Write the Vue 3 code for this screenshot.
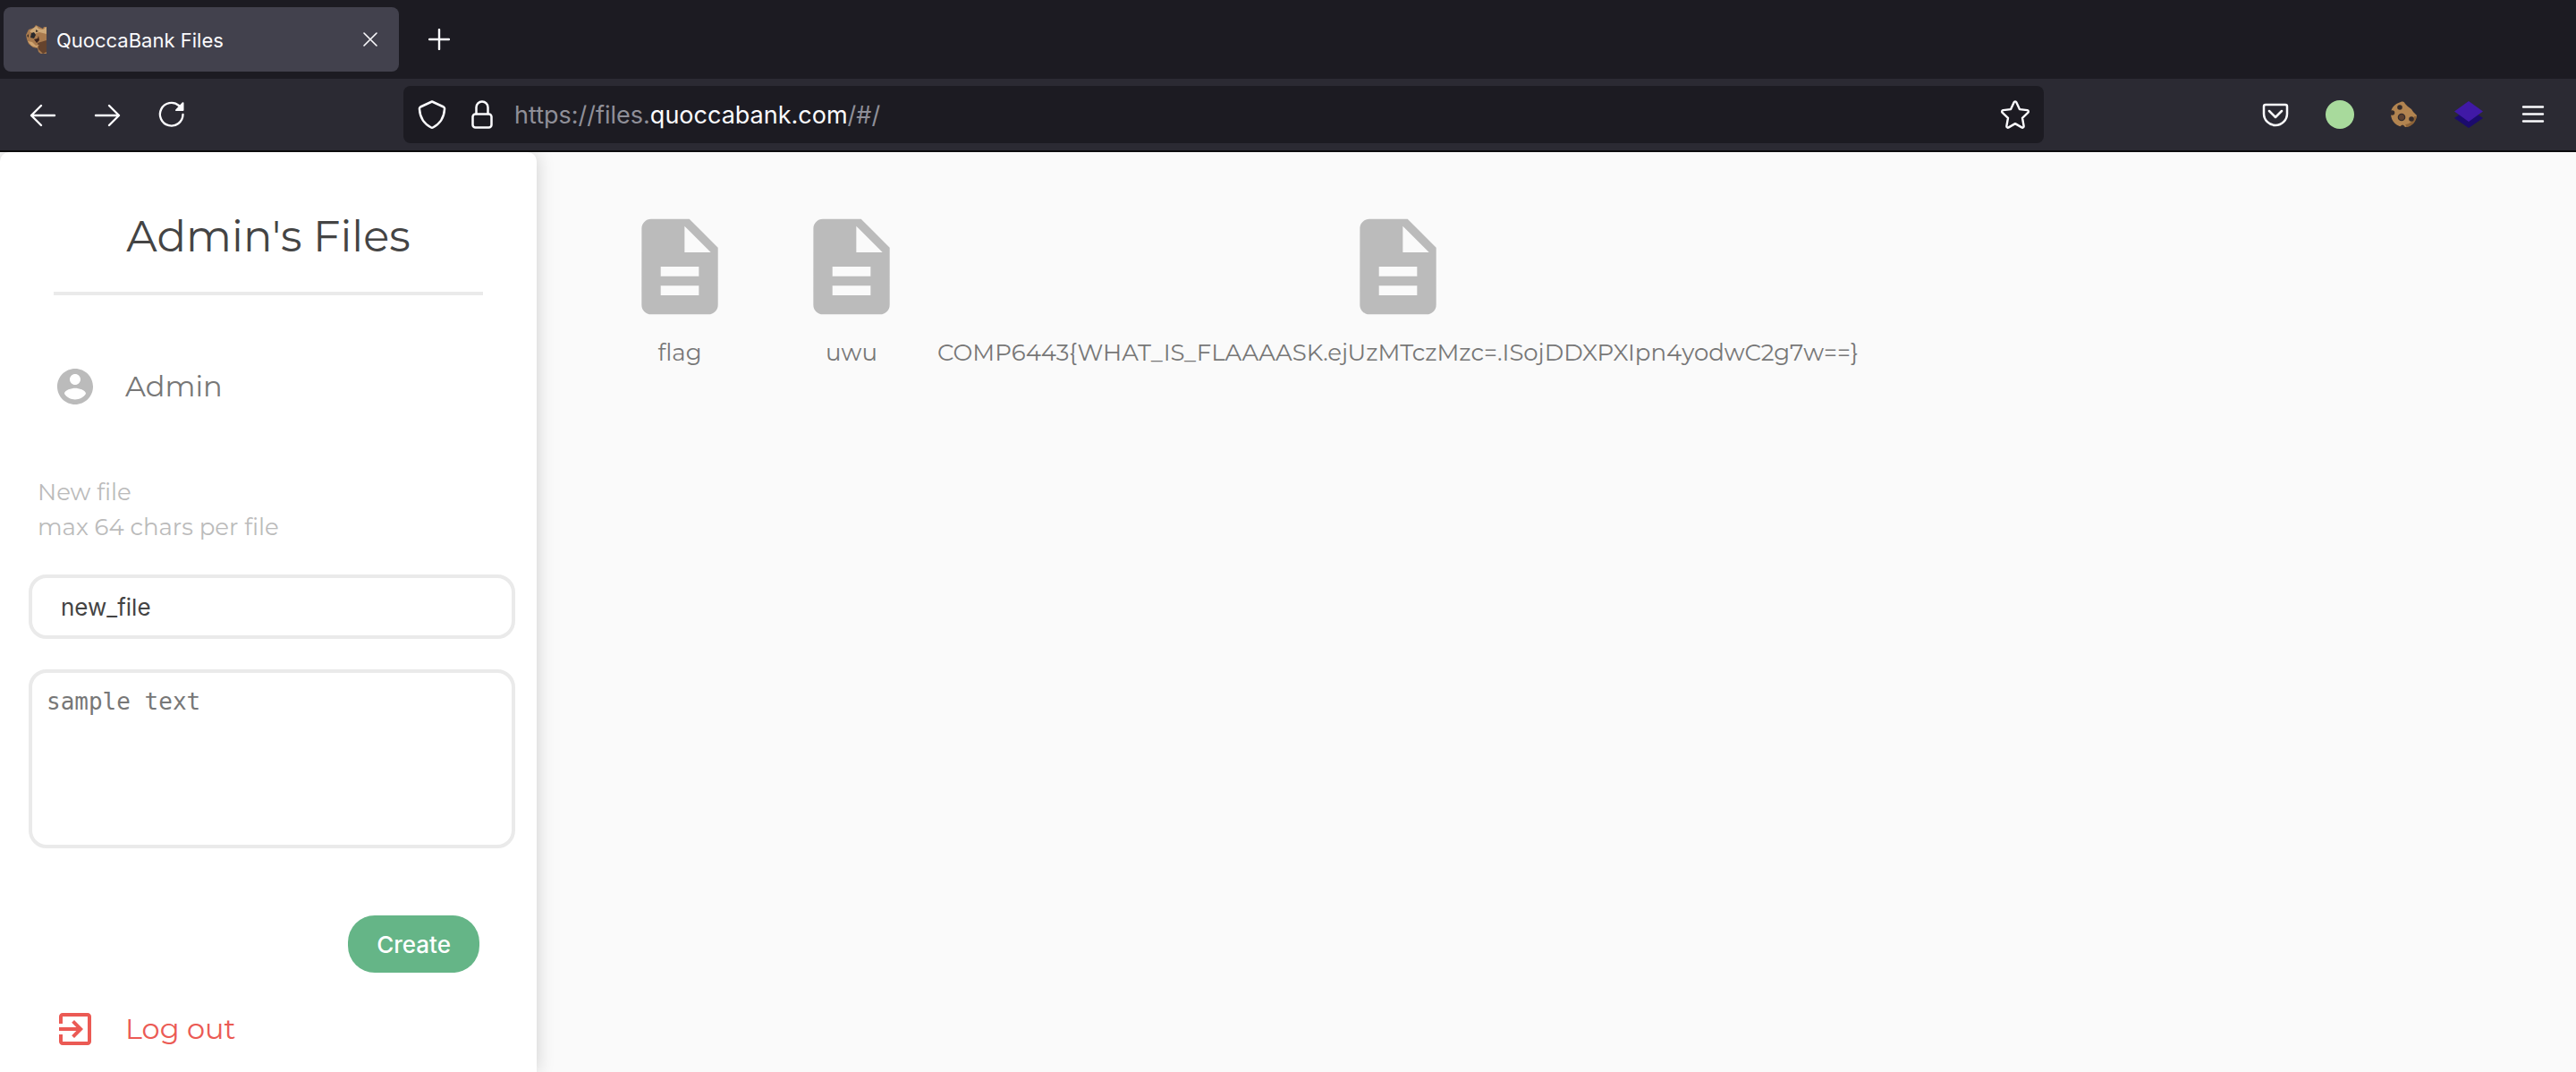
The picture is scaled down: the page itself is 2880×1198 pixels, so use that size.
<script setup>
import { ref } from 'vue'

const fileName = ref('new_file')
const fileText = ref('')
const files = [
  'flag',
  'uwu',
  'COMP6443{WHAT_IS_FLAAAASK.ejUzMTczMzc=.ISojDDXPXIpn4yodwC2g7w==}'
]
</script>

<template>
  <div class="window">
    <header class="browser">
      <div class="tabs">
        <div class="tab">
          <svg class="favicon" viewBox="0 0 24 32" aria-hidden="true">
            <path d="M1 11 4 5l6-2 2-3 4 2 4 2 1-2h3v30l-4 2-5-4-1-4-5-1-5-4-2-5z" fill="#a87a4e" />
            <path d="m10 3 3-2 2 3 5 1 4-3v8l-8-2-6 2-5-3z" fill="#cda878" />
            <path d="m14 20 10-3v13l-4 2-5-5z" fill="#65432d" />
            <path d="m3 18 5 1 4 4 4-1-3 3-6-2z" fill="#d0a470" />
            <path d="m7 9 3-1 2 3-2 4-4-1z" fill="#28282c" />
            <path d="m10 16 4-1 1-3 1 5-3 3z" fill="#3c241e" />
            <path d="m2 12 2-2v4zM12 5l3 2-3 1z" fill="#3e3027" />
          </svg>
          <span class="tab-title">QuoccaBank Files</span>
          <button class="tool close" aria-label="Close tab">
            <svg viewBox="0 0 16 16" width="16" height="16"><path d="m1 1 14 14M15 1 1 15" stroke-width="1.6" /></svg>
          </button>
        </div>
        <button class="tool plus" aria-label="New tab">
          <svg viewBox="0 0 24 24" width="24" height="24"><path d="M12 1v22M1 12h22" stroke-width="2.4" /></svg>
        </button>
      </div>

      <nav class="toolbar">
        <div class="history">
          <button class="tool" aria-label="Back">
            <svg viewBox="0 0 32 32" width="32" height="32"><path d="M29 17H3M14 6 3 17l11 11" stroke-width="2.4" /></svg>
          </button>
          <button class="tool" aria-label="Forward">
            <svg viewBox="0 0 32 32" width="32" height="32"><path d="M3 17h26M18 6l11 11-11 11" stroke-width="2.4" /></svg>
          </button>
          <button class="tool" aria-label="Reload">
            <svg viewBox="0 0 32 32" width="32" height="32">
              <path d="M28.500 16A12.800 12.800 0 1 1 24 6" stroke-width="2.400" />
              <path d="M29.500 3v8a1 1 0 0 1-1 1H21c-.9 0-1.300-1-.7-1.600l7.500-7.800c.6-.7 1.700-.5 1.700.4z" fill="#fbfbfe" stroke="none" />
            </svg>
          </button>
        </div>

        <div class="address">
          <div class="identity">
            <svg class="line" viewBox="0 0 32 32" width="32" height="32" aria-hidden="true">
              <path d="M16 1.500 29 7.500c1 .5 1.200 1 1 2.500-.5 9-4.500 16-13 20.500q-1 .5-2 0C6.500 26 2.500 19 2 10c-.2-1.500 0-2 1-2.500z" stroke-width="2.500" />
            </svg>
            <svg class="line" viewBox="0 0 24 32" width="24" height="32" aria-hidden="true">
              <rect x="1.500" y="15.500" width="21" height="15" rx="3" stroke-width="2.500" />
              <path d="M5.500 15V8a6.500 6.500 0 0 1 13 0v7" stroke-width="2.500" />
            </svg>
          </div>
          <p class="url">https://files.<b>quoccabank.com</b>/#/</p>
          <button class="tool" aria-label="Bookmark">
            <svg viewBox="0 0 32 32" width="32" height="32">
              <path d="M14.700 2.200c.5-1.100 2.100-1.100 2.600 0l3.600 7.900 8.500 1c1.400.2 1.900 1.800.9 2.700l-6.300 6 1.600 9c.2 1.400-1.100 2.300-2.300 1.600L16 26.100l-7.300 4.300c-1.200.7-2.500-.2-2.300-1.600l1.600-9-6.300-6c-1-.9-.5-2.500.9-2.700l8.500-1z" stroke-width="2.400" />
            </svg>
          </button>
        </div>

        <div class="extensions">
          <button class="tool" aria-label="Pocket">
            <svg viewBox="0 0 32 32" width="32" height="32">
              <path d="M5 5h22q2 0 2 2v8a13 13 0 0 1-26 0V7q0-2 2-2z" stroke-width="2.500" />
              <path d="m9 12 7 7 7-7" stroke-width="2.500" />
            </svg>
          </button>
          <button class="tool" aria-label="Status">
            <svg viewBox="0 0 32 32" width="32" height="32"><circle cx="16" cy="16" r="16" fill="#a8da9c" stroke="none" /></svg>
          </button>
          <button class="tool" aria-label="Cookies">
            <svg viewBox="0 0 32 32" width="32" height="32">
              <g stroke="none">
                <path d="M12 2c3-1 4 0 5 2l3 3 4 3 2 3 4 4c-1 6-5 12-13 13C8 30 1 24 1 15c0-6 4-11 11-13z" fill="#b28450" />
                <path d="M30 18c-1 6-5 11-11 12l-2-3c5 0 9-4 10-9z" fill="#8d6338" />
                <g fill="#352c2c">
                  <circle cx="11" cy="8" r="2.800" /><circle cx="2.500" cy="14" r="2.800" />
                  <circle cx="13" cy="19" r="4.300" /><circle cx="24" cy="21" r="2.800" />
                  <path d="M11 30q3-5 6 0z" />
                </g>
                <circle cx="13" cy="19" r="3" fill="#5b4030" />
              </g>
            </svg>
          </button>
          <button class="tool" aria-label="Layers">
            <svg viewBox="0 0 32 32" width="32" height="32">
              <path d="m16 9 16 11-16 11L0 20z" fill="#1b0b6d" stroke="none" />
              <path d="m16 1 16 11.500L16 24 0 12.500z" fill="#4019a6" stroke="none" />
            </svg>
          </button>
          <button class="tool" aria-label="Menu">
            <svg viewBox="0 0 32 32" width="32" height="32"><path d="M5 7.500h22M5 15.500h22M5 23.500h22" stroke-width="2.400" /></svg>
          </button>
        </div>
      </nav>
    </header>

    <div class="page">
      <aside class="sidebar">
        <h1>Admin's Files</h1>
        <div class="row user">
          <svg viewBox="0 0 24 24" width="48" height="48" aria-hidden="true">
            <path d="M12 2C6.480 2 2 6.480 2 12s4.480 10 10 10 10-4.480 10-10S17.520 2 12 2zm0 3c1.660 0 3 1.340 3 3s-1.340 3-3 3-3-1.340-3-3 1.340-3 3-3zm0 14.200c-2.500 0-4.710-1.280-6-3.220.03-1.990 4-3.080 6-3.080 1.990 0 5.970 1.090 6 3.080-1.290 1.940-3.500 3.220-6 3.220z" fill="#bbb" />
          </svg>
          <span>Admin</span>
        </div>
        <form class="create" @submit.prevent>
          <label class="hint" for="file-name">New file<br>max 64 chars per file</label>
          <input id="file-name" v-model="fileName" type="text">
          <textarea v-model="fileText" aria-label="File content" placeholder="sample text"></textarea>
          <button class="submit" type="submit">Create</button>
        </form>
        <a class="row logout" href="#/logout">
          <svg viewBox="0 0 24 24" width="48" height="48" aria-hidden="true">
            <path d="M10.090 15.590 11.500 17l5-5-5-5-1.410 1.410L12.670 11H3v2h9.670l-2.580 2.590zM19 3H5c-1.110 0-2 .9-2 2v4h2V5h14v14H5v-4H3v4c0 1.100.89 2 2 2h14c1.100 0 2-.9 2-2V5c0-1.100-.9-2-2-2z" fill="#eb5a54" />
          </svg>
          <span>Log out</span>
        </a>
      </aside>

      <main class="files">
        <a v-for="name in files" :key="name" class="file" href="#/">
          <svg viewBox="0 0 24 24" width="128" height="128" aria-hidden="true">
            <path d="M14 2H6c-1.100 0-1.990.9-1.990 2L4 20c0 1.100.89 2 1.990 2H18c1.100 0 2-.9 2-2V8l-6-6zm2 16H8v-2h8v2zm0-4H8v-2h8v2zm-3-5V3.500L18.500 9H13z" fill="#bbb" />
          </svg>
          <span>{{ name }}</span>
        </a>
      </main>
    </div>
  </div>
</template>

<style>
body {
  margin: 0;
}
</style>

<style scoped>
* {
  box-sizing: border-box;
}
.window {
  display: flex;
  flex-direction: column;
  min-height: 100vh;
  background: #fafafa;
  font-family: Montserrat, Inter, sans-serif;
  font-size: 26px;
}
svg {
  display: block;
  flex: none;
}
.browser {
  font-family: Inter, sans-serif;
  color: #fbfbfe;
  border-bottom: 2px solid #0c0c0d;
}
.tool {
  display: block;
  padding: 0;
  border: 0;
  background: none;
}
.tool svg,
.line {
  fill: none;
  stroke: #fbfbfe;
  stroke-linecap: round;
  stroke-linejoin: round;
}
.tabs {
  display: flex;
  align-items: center;
  gap: 33px;
  height: 88px;
  padding: 0 4px;
  background: #1c1b22;
}
.tab {
  display: flex;
  align-items: center;
  gap: 11px;
  width: 442px;
  height: 72px;
  padding: 0 24px;
  border-radius: 8px;
  background: #42414d;
}
.favicon {
  width: 24px;
  height: 32px;
}
.tab-title {
  flex: 1;
  padding-top: 2px;
  font-size: 22px;
  line-height: 32px;
}
.toolbar {
  display: flex;
  align-items: center;
  height: 80px;
  padding: 0 32px;
  background: #2b2a33;
}
.history {
  display: flex;
  gap: 40px;
  width: 419px;
}
.address {
  display: flex;
  flex: 1;
  align-items: center;
  gap: 24px;
  height: 64px;
  padding: 0 16px;
  border-radius: 8px;
  background: #1c1b22;
}
.identity {
  display: flex;
  gap: 28px;
}
.url {
  flex: 1;
  margin: 0;
  padding-top: 2px;
  color: #8f8f98;
  font-size: 27px;
  line-height: 40px;
}
.url b {
  color: #fbfbfe;
  font-weight: 400;
}
.extensions {
  display: flex;
  gap: 40px;
  margin-left: 243px;
}
.page {
  display: flex;
  flex: 1;
}
.sidebar {
  display: flex;
  flex-direction: column;
  width: 600px;
  padding-bottom: 24px;
  border-radius: 10px 10px 0 0;
  background: #fff;
  box-shadow: 0 0 20px rgba(0, 0, 0, 0.18);
  clip-path: inset(0 -40px 0 0);
}
h1 {
  margin: 0 60px;
  padding: 62px 0 30px;
  border-bottom: 4px solid #eaeaea;
  color: #444;
  font-size: 48px;
  font-weight: 400;
  line-height: 64px;
  text-align: center;
}
.row {
  display: flex;
  align-items: center;
  gap: 32px;
  margin: 0 60px;
  font-size: 32px;
  line-height: 48px;
}
.user {
  margin-top: 78px;
  color: #777;
}
.logout {
  margin-top: auto;
  color: #eb5a54;
  text-decoration: none;
}
.create {
  display: flex;
  flex-direction: column;
  margin: 75px 24px 39px 32px;
}
.hint {
  margin: 0 10px 33px;
  color: #bbb;
  line-height: 39px;
}
input,
textarea {
  display: block;
  width: 100%;
  border: 4px solid #eaeaea;
  border-radius: 20px;
  outline: none;
  background: #fff;
  color: #444;
}
input {
  height: 72px;
  margin-bottom: 34px;
  padding: 0 32px;
  font: 26px Inter, sans-serif;
}
textarea {
  height: 200px;
  padding: 16px;
  font: 26px/32px "DejaVu Sans Mono", monospace;
  resize: none;
}
textarea::placeholder {
  color: #777;
}
.submit {
  align-self: flex-end;
  height: 64px;
  margin: 75px 40px 0 0;
  padding: 0 32px;
  border: 0;
  border-radius: 30px;
  background: #65b587;
  color: #fff;
  font: 500 26px Inter, sans-serif;
}
.files {
  display: flex;
  flex: 1;
  flex-wrap: wrap;
  align-content: flex-start;
  padding: 32px 64px;
}
.file {
  display: flex;
  flex-direction: column;
  align-items: center;
  color: #777;
  line-height: 40px;
  text-decoration: none;
}
.file svg {
  margin: 32px 32px 12px;
}
</style>
